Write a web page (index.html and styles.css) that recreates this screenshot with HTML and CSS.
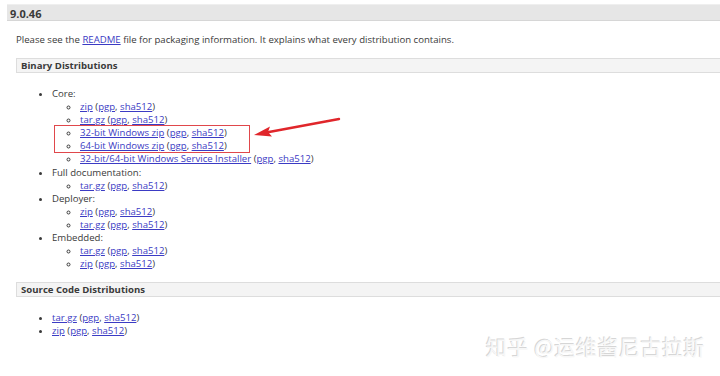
FILE: index.html
```html
<!doctype html>
<html>

<head>
    <title>Tomcat 9 Downloads</title>
    <meta charset="utf-8" />
    <link rel="stylesheet" href="styles.css">
</head>

<body>
    <h3 class="version">9.0.46</h3>
    <div class="release">
        <p class="intro">Please see the <a href="#">README</a> file for packaging information. It explains what every distribution contains.</p>
        <h4 class="section">Binary Distributions</h4>
        <ul class="dist">
            <li>Core:
                <ul class="sub">
                    <li><a href="#">zip</a> (<a href="#">pgp</a>, <a href="#">sha512</a>)</li>
                    <li><a href="#">tar.gz</a> (<a href="#">pgp</a>, <a href="#">sha512</a>)</li>
                    <li class="marked"><a href="#">32-bit Windows zip</a> (<a href="#">pgp</a>, <a href="#">sha512</a>)
                        <span class="highlight"></span>
                        <svg class="arrow" width="90" height="24" viewBox="0 0 90 24">
                            <path d="M88 2 L18 15" stroke="#e0262b" stroke-width="2.4" stroke-linecap="round" fill="none" />
                            <path d="M3 18 L19 9.5 L17 15 L21 19.5 Z" fill="#e0262b" />
                        </svg>
                    </li>
                    <li><a href="#">64-bit Windows zip</a> (<a href="#">pgp</a>, <a href="#">sha512</a>)</li>
                    <li><a href="#">32-bit/64-bit Windows Service Installer</a> (<a href="#">pgp</a>, <a href="#">sha512</a>)</li>
                </ul>
            </li>
            <li>Full documentation:
                <ul class="sub">
                    <li><a href="#">tar.gz</a> (<a href="#">pgp</a>, <a href="#">sha512</a>)</li>
                </ul>
            </li>
            <li>Deployer:
                <ul class="sub">
                    <li><a href="#">zip</a> (<a href="#">pgp</a>, <a href="#">sha512</a>)</li>
                    <li><a href="#">tar.gz</a> (<a href="#">pgp</a>, <a href="#">sha512</a>)</li>
                </ul>
            </li>
            <li>Embedded:
                <ul class="sub">
                    <li><a href="#">tar.gz</a> (<a href="#">pgp</a>, <a href="#">sha512</a>)</li>
                    <li><a href="#">zip</a> (<a href="#">pgp</a>, <a href="#">sha512</a>)</li>
                </ul>
            </li>
        </ul>
        <h4 class="section">Source Code Distributions</h4>
        <ul class="dist">
            <li><a href="#">tar.gz</a> (<a href="#">pgp</a>, <a href="#">sha512</a>)</li>
            <li><a href="#">zip</a> (<a href="#">pgp</a>, <a href="#">sha512</a>)</li>
        </ul>
    </div>
    <div class="watermark">知乎 @运维酱尼古拉斯</div>
</body>

</html>
```

FILE: styles.css
```css
body { margin: 0; background: #fff; color: #3a3a3a; font-family: "Open Sans", "Noto Sans", sans-serif; font-size: 9.6px; line-height: 13.1px; position: relative; height: 376px; overflow: hidden; }
a { color: #3b3bc4; text-decoration: underline; }
.version { margin: 4px 0 0 7px; padding: 0 3px; height: 17px; line-height: 17px; background: #e6e6e6; border-top: 1px solid #efefef; border-bottom: 1px solid #d6d6d6; font-size: 11px; font-weight: 700; box-sizing: border-box; }
.release { padding-left: 16px; }
.intro { margin: 12px 0 0; line-height: 14px; }
.section { margin: 11px 0 0; padding: 0 4px; height: 15px; line-height: 14px; background: #f4f4f4; border: 1px solid #ddd; border-right: 0; font-size: 9.6px; font-weight: 700; box-sizing: border-box; }
.dist { margin: 14px 0 0; padding-left: 36px; list-style: disc; }
.dist + .section { margin-top: 12px; }
.sub { margin: 0; padding-left: 28px; list-style: circle; }
.marked { position: relative; }
.highlight { position: absolute; left: -26px; top: -1px; width: 196px; height: 28px; border: 1px solid #e0474b; box-sizing: border-box; }
.arrow { position: absolute; left: 171px; top: -9px; }
.watermark { position: absolute; left: 486px; top: 333px; font-family: "Noto Sans CJK SC", sans-serif; font-size: 21px; line-height: 26px; color: #f7f7f7; letter-spacing: 0.5px; text-shadow: -1px -1px 0 #d6d6d6, 1px 1px 0 #fff; }
```
